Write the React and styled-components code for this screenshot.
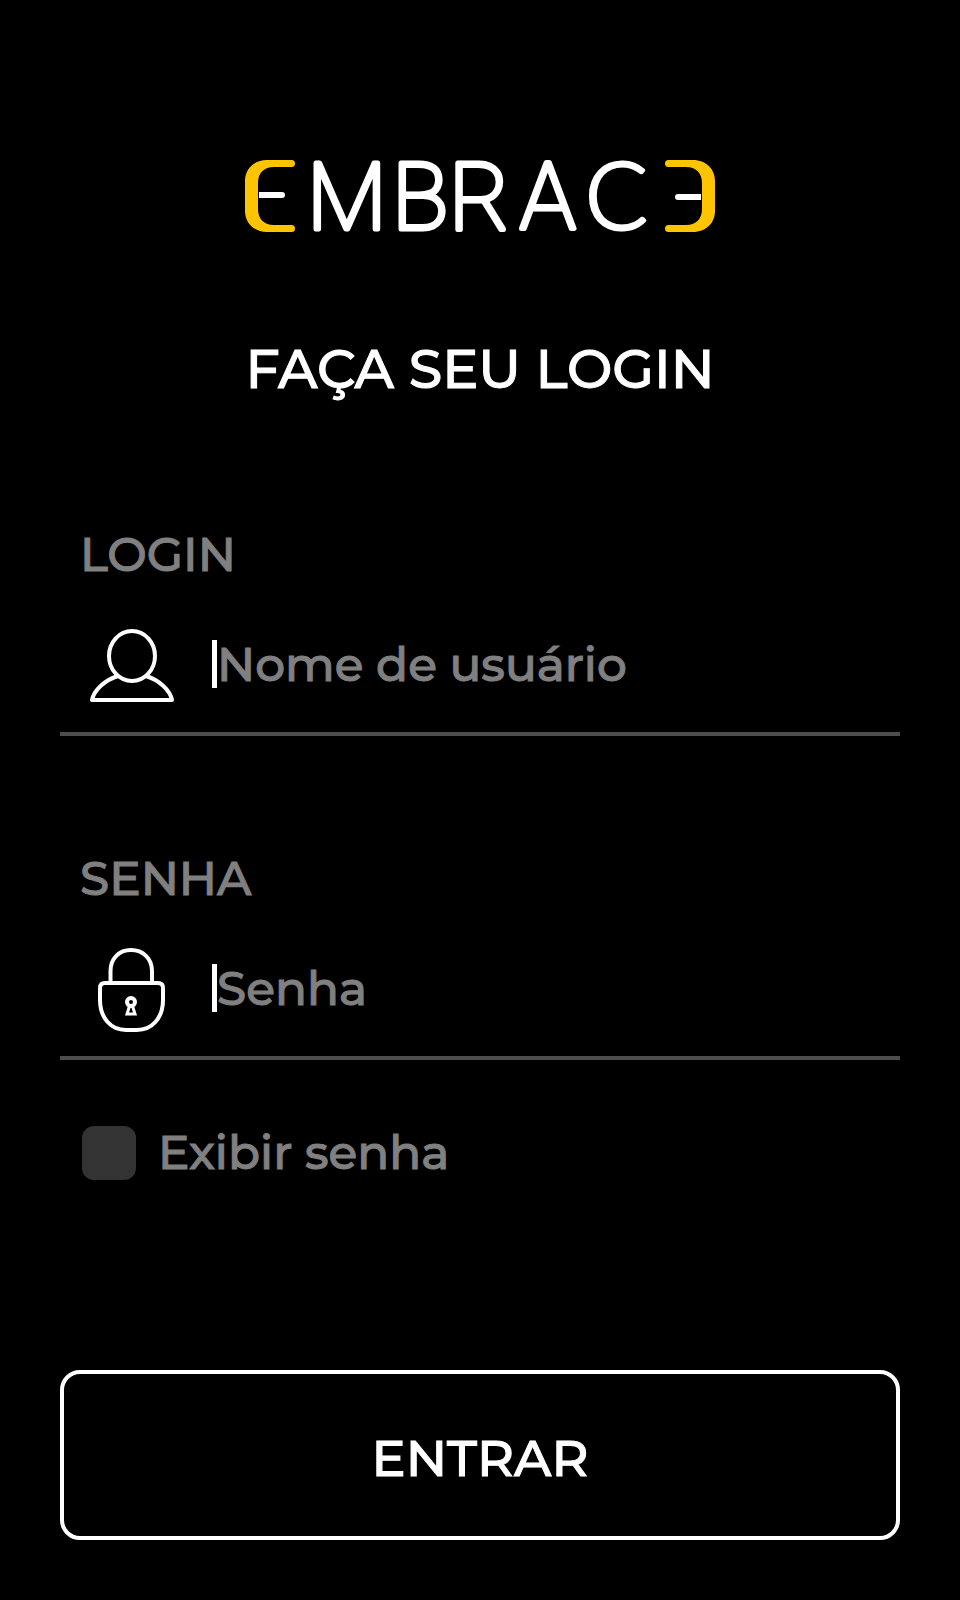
import React, { useState } from "react";
import styled, { createGlobalStyle } from "styled-components";

const GlobalStyle = createGlobalStyle`
  * { box-sizing: border-box; }
  body {
    margin: 0;
    background: #000;
    color: #fff;
    font-family: Montserrat, Inter, sans-serif;
    font-weight: 500;
    -webkit-text-stroke: 1px;
  }
`;

const Page = styled.main`
  display: flex;
  flex-direction: column;
  min-height: 100vh;
  padding: 160px 60px 60px;
`;

const Logo = styled.svg`
  display: block;
  width: 470px;
  max-width: 100%;
  height: auto;
  margin: 0 auto;
  overflow: visible;
`;

const Wordmark = styled.text`
  fill: #fff;
  stroke: #fff;
  stroke-width: 5px;
  stroke-linejoin: round;
  font-family: Roboto, sans-serif;
  font-weight: 100;
  font-size: 93px;
`;

const RoundLetter = styled.tspan`
  font-family: Lato, sans-serif;
  font-weight: 300;
  stroke-width: 3px;
`;

const Title = styled.h1`
  margin: 103px 0 124px;
  font-size: 54px;
  line-height: 68px;
  font-weight: 500;
  text-align: center;
`;

const Form = styled.form`
  display: flex;
  flex-direction: column;
`;

const Field = styled.div`
  margin-bottom: ${(p) => (p.$last ? 66 : 115)}px;
`;

const FieldLabel = styled.label`
  display: block;
  margin-bottom: 16px;
  padding-left: 20px;
  color: #808080;
  font-size: 47px;
  line-height: 56px;
`;

const InputRow = styled.div`
  display: flex;
  align-items: center;
  height: 137px;
  border-bottom: 4px solid #4d4d4d;
`;

const IconSlot = styled.span`
  display: flex;
  justify-content: center;
  flex: none;
  width: 144px;
  margin-right: 8px;
`;

const InputBox = styled.span`
  display: flex;
  align-items: center;
  flex: 1;
  min-width: 0;
  padding-bottom: 4px;
`;

const Caret = styled.span`
  flex: none;
  width: 5px;
  height: 48px;
  background: #fff;
`;

const TextInput = styled.input`
  flex: 1;
  min-width: 0;
  height: 64px;
  padding: 2px 0 0;
  border: 0;
  outline: 0;
  background: transparent;
  color: #fff;
  font: inherit;
  font-size: 47px;
  &::placeholder { color: #808080; opacity: 1; }
`;

const CheckLabel = styled.label`
  display: flex;
  align-items: center;
  gap: 22px;
  padding-left: 22px;
  color: #808080;
  font-size: 47px;
  line-height: 54px;
`;

const Checkbox = styled.input`
  appearance: none;
  flex: none;
  width: 54px;
  height: 54px;
  margin: 0;
  border-radius: 12px;
  background: #333;
  &:checked { background: #ffc400; }
`;

const SubmitButton = styled.button`
  height: 170px;
  margin-top: 190px;
  padding: 6px 0 0;
  border: 4px solid #fff;
  border-radius: 20px;
  background: transparent;
  color: #fff;
  font: inherit;
  font-size: 51px;
`;

const BRACKET =
  "M46 0H22C9 0 0 9 0 21V51C0 63 9 72 22 72H46.500A3.500 3.500 0 0 0 46.500 65H29C19 65 13 59 13 49V23C13 13 19 7 29 7H46.500A3.500 3.500 0 0 0 46.500 0Z";

function BrandLogo() {
  return (
    <Logo viewBox="0 0 470 72" role="img" aria-label="EMBRACE">
      <path d={BRACKET} fill="#ffc400" />
      <path d="M14 35H37" stroke="#fff" strokeWidth="6" />
      <circle cx="37" cy="35" r="3" fill="#fff" />
      <Wordmark x="62 147 204 275 340" y="69">
        MBRA<RoundLetter>C</RoundLetter>
      </Wordmark>
      <path d={BRACKET} fill="#ffc400" transform="translate(470 0) scale(-1 1)" />
      <path d="M456 37H433" stroke="#fff" strokeWidth="6" />
      <circle cx="433" cy="37" r="3" fill="#fff" />
    </Logo>
  );
}

function UserIcon() {
  return (
    <svg width="84" height="73" viewBox="0 0 84 73" fill="none" stroke="#fff" strokeWidth="4" strokeLinejoin="round" aria-hidden="true">
      <ellipse cx="42" cy="27" rx="23" ry="25" />
      <path d="M28 47C15 51 4 61 2 71H82C80 61 69 51 56 47" />
    </svg>
  );
}

function LockIcon() {
  return (
    <svg width="68" height="84" viewBox="0 0 68 84" fill="none" stroke="#fff" strokeWidth="4" aria-hidden="true">
      <path d="M12.500 35V23C12.500 10.500 21 2 33 2S54 10.500 54 23V35" />
      <path d="M7 35H60Q65 35 65 40V52C65 70 54 82 39 82H28C13 82 2 70 2 52V40Q2 35 7 35Z" />
      <circle cx="33" cy="54" r="4" />
      <path d="M31.500 58L29 66H37L34.500 58Z" strokeWidth="3" />
    </svg>
  );
}

export default function App() {
  const [visible, setVisible] = useState(false);
  return (
    <>
      <GlobalStyle />
      <Page>
        <BrandLogo />
        <Title>FAÇA SEU LOGIN</Title>
        <Form onSubmit={(e) => e.preventDefault()}>
          <Field>
            <FieldLabel htmlFor="login">LOGIN</FieldLabel>
            <InputRow>
              <IconSlot><UserIcon /></IconSlot>
              <InputBox>
                <Caret />
                <TextInput id="login" type="text" placeholder="Nome de usuário" />
              </InputBox>
            </InputRow>
          </Field>
          <Field $last>
            <FieldLabel htmlFor="senha">SENHA</FieldLabel>
            <InputRow>
              <IconSlot><LockIcon /></IconSlot>
              <InputBox>
                <Caret />
                <TextInput id="senha" type={visible ? "text" : "password"} placeholder="Senha" />
              </InputBox>
            </InputRow>
          </Field>
          <CheckLabel>
            <Checkbox type="checkbox" checked={visible} onChange={(e) => setVisible(e.target.checked)} />
            Exibir senha
          </CheckLabel>
          <SubmitButton type="submit">ENTRAR</SubmitButton>
        </Form>
      </Page>
    </>
  );
}
